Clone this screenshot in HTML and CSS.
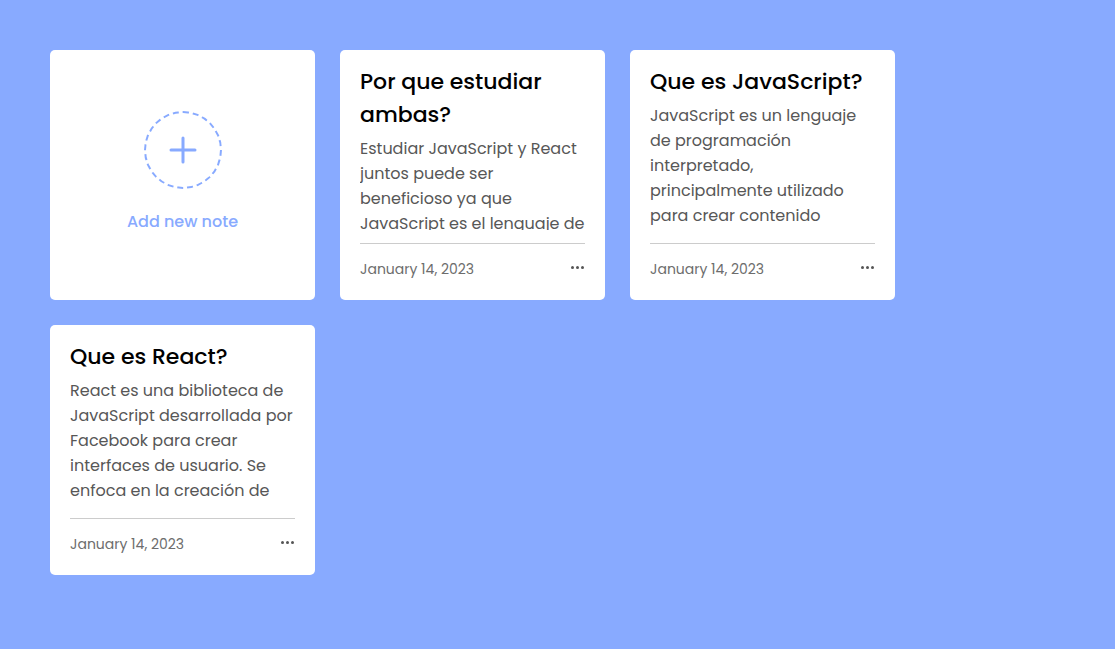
FILE: index.html
```html
<!DOCTYPE html>
<html lang="es">
<head>
<meta charset="utf-8">
<title>Notes</title>
<link rel="stylesheet" href="styles.css">
</head>
<body>
<main class="wrapper">
  <div class="card add-card">
    <div class="add-icon">
      <svg width="30" height="30" viewBox="0 0 30 30"><path d="M15 3v24M3 15h24" stroke="#88aaff" stroke-width="3" stroke-linecap="round" fill="none"/></svg>
    </div>
    <p class="add-label">Add new note</p>
  </div>

  <div class="card note">
    <div class="details">
      <h2 class="title">Por que estudiar ambas?</h2>
      <p class="body">Estudiar JavaScript y React juntos puede ser beneficioso ya que JavaScript es el lenguaje de programación en el que se basa React, por lo que es importante conocerlo.</p>
    </div>
    <div class="bottom">
      <span class="date">January 14, 2023</span>
      <span class="menu"><i></i><i></i><i></i></span>
    </div>
  </div>

  <div class="card note">
    <div class="details">
      <h2 class="title">Que es JavaScript?</h2>
      <p class="body">JavaScript es un lenguaje de programación interpretado, principalmente utilizado para crear contenido</p>
    </div>
    <div class="bottom">
      <span class="date">January 14, 2023</span>
      <span class="menu"><i></i><i></i><i></i></span>
    </div>
  </div>

  <div class="card note">
    <div class="details">
      <h2 class="title">Que es React?</h2>
      <p class="body">React es una biblioteca de JavaScript desarrollada por Facebook para crear interfaces de usuario. Se enfoca en la creación de</p>
    </div>
    <div class="bottom">
      <span class="date">January 14, 2023</span>
      <span class="menu"><i></i><i></i><i></i></span>
    </div>
  </div>
</main>
</body>
</html>
```

FILE: styles.css
```css
* { box-sizing: border-box; }
html, body { margin: 0; padding: 0; }
body {
  background: #88aaff;
  font-family: "Poppins", "Open Sans", sans-serif;
  min-height: 100vh;
}
.wrapper {
  display: grid;
  grid-template-columns: repeat(auto-fill, 265px);
  gap: 25px;
  padding: 50px;
}
.card {
  height: 250px;
  background: #fff;
  border-radius: 5px;
}
.add-card {
  display: flex;
  flex-direction: column;
  align-items: center;
  justify-content: center;
  padding-bottom: 6px;
}
.add-icon {
  width: 78px;
  height: 78px;
  border: 2px dashed #88aaff;
  border-radius: 50%;
  display: flex;
  align-items: center;
  justify-content: center;
}
.add-icon svg { display: block; }
.add-label {
  margin: 21px 0 0;
  color: #88aaff;
  font-size: 16px;
  font-weight: 500;
  line-height: 24px;
}
.note {
  display: flex;
  flex-direction: column;
  padding: 15px 20px 20px;
}
.details {
  flex: 1;
  min-height: 0;
  overflow: hidden;
  margin-bottom: 13px;
}
.title {
  margin: 0 0 5px;
  font-size: 22px;
  font-weight: 500;
  line-height: 33px;
  color: #000;
}
.body {
  margin: 0;
  font-size: 16px;
  line-height: 25px;
  color: #575757;
}
.bottom {
  border-top: 1px solid #ccc;
  padding-top: 15px;
  display: flex;
  justify-content: space-between;
  align-items: center;
}
.date {
  font-size: 14px;
  line-height: 21px;
  color: #6d6d6d;
}
.menu {
  display: flex;
  gap: 2px;
  padding: 0 1px 4px 0;
}
.menu i {
  width: 3px;
  height: 3px;
  border-radius: 50%;
  background: #555;
}
```
